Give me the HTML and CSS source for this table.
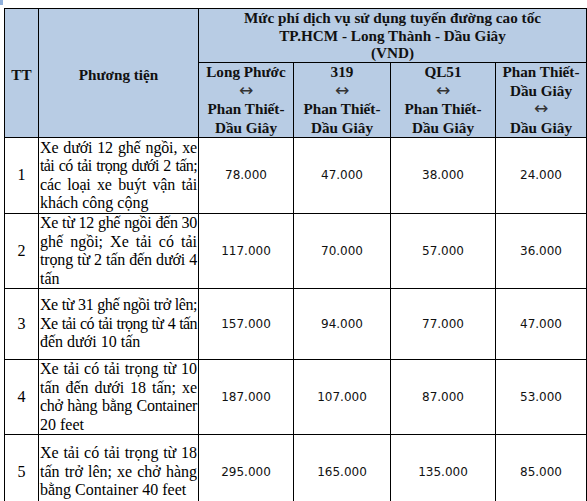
FILE: index.html
```html
<!DOCTYPE html>
<html lang="vi">
<head>
<meta charset="utf-8">
<title>Mức phí</title>
<link rel="stylesheet" href="styles.css">
</head>
<body>
<span class="handle"></span>
<table class="fee">
  <colgroup>
    <col class="c-tt">
    <col class="c-pt">
    <col class="c-lp">
    <col class="c-319">
    <col class="c-ql">
    <col class="c-dg">
  </colgroup>
  <thead>
    <tr class="h1">
      <th rowspan="2" class="mid">TT</th>
      <th rowspan="2" class="mid">Phương tiện</th>
      <th colspan="4" class="top">Mức phí dịch vụ sử dụng tuyến đường cao tốc<br>TP.HCM - Long Thành - Dầu Giây<br>(VND)</th>
    </tr>
    <tr class="h2">
      <th class="top">Long Phước<br><span class="arr">↔</span><br>Phan Thiết-<br>Dầu Giây</th>
      <th class="top">319<br><span class="arr">↔</span><br>Phan Thiết-<br>Dầu Giây</th>
      <th class="top">QL51<br><span class="arr">↔</span><br>Phan Thiết-<br>Dầu Giây</th>
      <th class="top">Phan Thiết-<br>Dầu Giây<br><span class="arr">↔</span><br>Dầu Giây</th>
    </tr>
  </thead>
  <tbody>
    <tr class="r1">
      <td class="tt">1</td>
      <td class="pt">
        <span class="ln k1">Xe dưới 12 ghế ngồi, xe</span>
        <span class="ln k4">tải có tải trọng dưới 2 tấn;</span>
        <span class="ln k1">các loại xe buýt vận tải</span>
        <span class="ln last">khách công cộng</span>
      </td>
      <td class="num">78.000</td><td class="num">47.000</td><td class="num">38.000</td><td class="num">24.000</td>
    </tr>
    <tr class="r2">
      <td class="tt">2</td>
      <td class="pt">
        <span class="ln k2">Xe từ 12 ghế ngồi đến 30</span>
        <span class="ln">ghế ngồi; Xe tải có tải</span>
        <span class="ln k1">trọng từ 2 tấn đến dưới 4</span>
        <span class="ln last">tấn</span>
      </td>
      <td class="num">117.000</td><td class="num">70.000</td><td class="num">57.000</td><td class="num">36.000</td>
    </tr>
    <tr class="r3">
      <td class="tt">3</td>
      <td class="pt">
        <span class="ln k3">Xe từ 31 ghế ngồi trở lên;</span>
        <span class="ln k4">Xe tải có tải trọng từ 4 tấn</span>
        <span class="ln last">đến dưới 10 tấn</span>
      </td>
      <td class="num">157.000</td><td class="num">94.000</td><td class="num">77.000</td><td class="num">47.000</td>
    </tr>
    <tr class="r4">
      <td class="tt">4</td>
      <td class="pt">
        <span class="ln">Xe tải có tải trọng từ 10</span>
        <span class="ln">tấn đến dưới 18 tấn; xe</span>
        <span class="ln k2">chở hàng bằng Container</span>
        <span class="ln last">20 feet</span>
      </td>
      <td class="num">187.000</td><td class="num">107.000</td><td class="num">87.000</td><td class="num">53.000</td>
    </tr>
    <tr class="r5">
      <td class="tt">5</td>
      <td class="pt">
        <span class="ln">Xe tải có tải trọng từ 18</span>
        <span class="ln">tấn trở lên; xe chở hàng</span>
        <span class="ln last">bằng Container 40 feet</span>
      </td>
      <td class="num">295.000</td><td class="num">165.000</td><td class="num">135.000</td><td class="num">85.000</td>
    </tr>
  </tbody>
</table>
</body>
</html>
```
FILE: styles.css
```css
html, body {
  margin: 0;
  padding: 0;
  background: #ffffff;
}
body {
  padding: 8px 0 0 4px;
  font-family: "Liberation Serif", "Times New Roman", serif;
  color: #000;
  overflow: hidden;
  height: 501px;
  box-sizing: border-box;
}
.handle {
  position: absolute;
  left: 0;
  top: 0;
  width: 3px;
  height: 5px;
  background: #8fb0dc;
}
.fee {
  border-collapse: collapse;
  table-layout: fixed;
  width: 582px;
}
.c-tt { width: 34px; }
.c-pt { width: 160px; }
.c-lp { width: 95px; }
.c-319 { width: 97px; }
.c-ql { width: 105px; }
.c-dg { width: 91px; }
.fee th, .fee td {
  border: 1px solid #000;
  padding: 0 1px;
}
.fee th {
  background: #b8cce4;
  font-weight: bold;
  font-size: 15.2px;
  line-height: 18px;
  color: #111;
  text-align: center;
}
.fee th.top { vertical-align: top; }
.fee th.mid { vertical-align: middle; }
.h1 th { height: 53px; }
.h1 th.top { line-height: 17.7px; }
.h1 th.mid { padding-top: 3px; }
.h2 th { height: 74px; line-height: 18.5px; }
.h2 th.top { padding-top: 0; }
.arr {
  font-weight: normal;
  font-size: 17px;
  line-height: 10px;
  font-family: "DejaVu Sans", sans-serif;
  color: #333;
}
.fee td {
  font-size: 16px;
  line-height: 18.5px;
  vertical-align: middle;
}
.tt { text-align: center; }
.fee td.pt {
  padding: 0 1px 0 1px;
}
.ln {
  display: block;
  white-space: nowrap;
  text-align: justify;
  text-align-last: justify;
}
.ln.last {
  text-align: left;
  text-align-last: left;
}
.k1 { letter-spacing: -0.15px; }
.k2 { letter-spacing: -0.3px; }
.k3 { letter-spacing: -0.45px; }
.k4 { letter-spacing: -0.6px; }
.fee td.num {
  text-align: center;
  font-family: "DejaVu Sans", "Verdana", sans-serif;
  font-size: 12px;
  color: #111;
}
.r1 td { height: 75px; }
.r2 td { height: 74px; }
.r3 td { height: 70px; }
.r4 td { height: 74px; }
.r5 td { height: 74px; }
```
